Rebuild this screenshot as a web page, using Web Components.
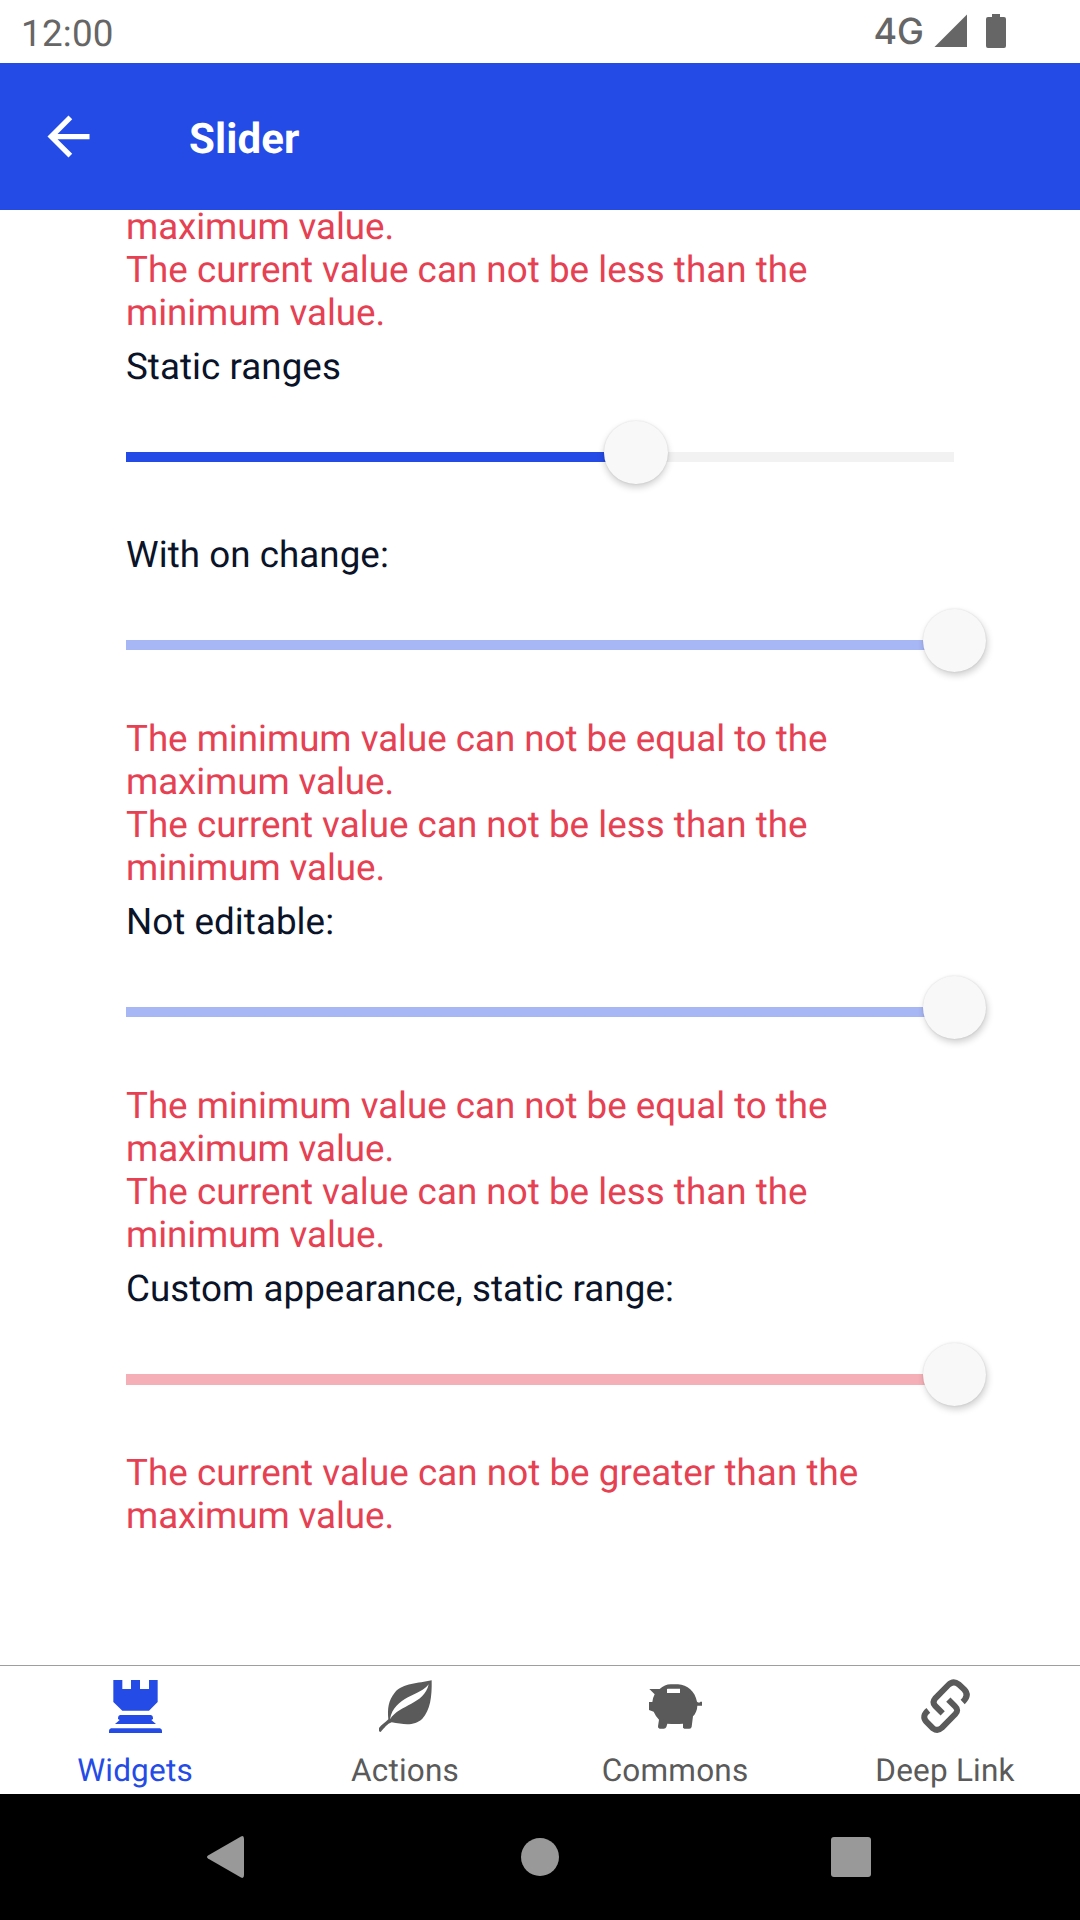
<!DOCTYPE html>
<html lang="en">
<head>
<meta charset="utf-8">
<title>Slider</title>
<style>
html,body{margin:0;padding:0;background:#fff}
body{width:1080px;height:1920px;overflow:hidden;font-family:Roboto,"Noto Sans",sans-serif;font-size:36.75px;color:#0a1328;text-rendering:geometricPrecision}
.tight{letter-spacing:-.03px}
.short{letter-spacing:-.08px}
.loose{letter-spacing:.03px}
.wide{letter-spacing:.05px}
</style>
</head>
<body>
<app-screen>
  <status-bar slot="status"></status-bar>
  <app-bar slot="bar">Slider</app-bar>
  <error-text><span class="short">maximum value.</span><br><span class="loose">The current value can not be less than the</span><br><span class="short">minimum value.</span></error-text>
  <slider-field value="61.55" label="Static ranges"></slider-field>
  <slider-field value="100" label="With on change:" tone="muted"></slider-field>
  <error-text><span class="tight">The minimum value can not be equal to the</span><br><span class="short">maximum value.</span><br><span class="loose">The current value can not be less than the</span><br><span class="short">minimum value.</span></error-text>
  <slider-field value="100" label="Not editable:" tone="muted"></slider-field>
  <error-text><span class="tight">The minimum value can not be equal to the</span><br><span class="short">maximum value.</span><br><span class="loose">The current value can not be less than the</span><br><span class="short">minimum value.</span></error-text>
  <slider-field value="100" label="Custom appearance, static range:" tone="danger"></slider-field>
  <error-text><span class="wide">The current value can not be greater than the</span><br><span class="short">maximum value.</span></error-text>
  <tab-bar slot="tabs">
    <tab-item active label="Widgets"><svg viewBox="129 75 192 189" width="64" height="63" fill="currentColor"><path d="M160 90H187V117H213V90H240V117H267V90H293V156L267 182H187L160 156ZM180 195H273Q279 197 279 204V207L274 210L288 222H165L179 210L174 207V204Q174 197 180 195ZM153 235H300Q306 237 306 242V249H147V242Q147 237 153 235Z"/></svg></tab-item>
    <tab-item label="Actions"><svg viewBox="129 75 192 189" width="64" height="63" fill="currentColor"><path d="M305 91C306 140 301 181 277 206C253 229 222 223 185 217C171 222 164 233 152 246L147 244V234C155 223 166 218 175 208C172 176 175 151 194 128C220 98 264 101 305 91ZM296 103C273 137 192 139 180 208C210 162 282 165 296 103Z"/></svg></tab-item>
    <tab-item label="Commons"><svg viewBox="159 75 192 189" width="64" height="63" fill="currentColor" fill-rule="evenodd"><path d="M178 117H209Q224 103 242 103H264C292 104 315 124 321 155Q328 160 331 155H336V167H322C322 180 316 192 309 199L305 230Q304 236 298 236H283Q277 235 279 229V221Q256 223 232 221L229 231Q227 236 221 236H209Q203 235 204 229L207 209Q197 199 191 185L177 180V156H187Q189 142 194 133ZM233 116Q231 116 231 118V129H270V116Z"/></svg></tab-item>
    <tab-item label="Deep Link"><svg viewBox="159 75 192 189" width="64" height="63" fill="none" stroke="currentColor" stroke-width="18"><path d="M248 190L225 167Q216 156 225 146L265 105Q280 90 296 103L313 119Q329 136 308 156M265 149L286 170Q297 180 286 192L246 233Q233 245 219 235L199 215Q184 198 205 181"/></svg></tab-item>
  </tab-bar>
  <nav-bar slot="nav"></nav-bar>
</app-screen>
<script>
const define = (name, render) => customElements.define(name, class extends HTMLElement {
  constructor() { super(); this.attachShadow({mode: 'open'}); }
  connectedCallback() { this.shadowRoot.innerHTML = render(this); }
});

define('app-screen', () => `<style>
:host{display:flex;flex-direction:column;width:1080px;height:1920px;background:#fff;overflow:hidden}
main{flex:1;min-height:0;box-sizing:border-box;overflow:hidden;display:flex;flex-direction:column;justify-content:flex-end;padding:0 126px 128px}
</style><slot name="status"></slot><slot name="bar"></slot><main><slot></slot></main><slot name="tabs"></slot><slot name="nav"></slot>`);

define('status-bar', () => `<style>
:host{display:flex;flex:none;height:63px;box-sizing:border-box;padding:0 74px 0 21px;color:#666;line-height:67px}
.time{letter-spacing:.25px}
.net{margin-left:auto;font-family:Inter,Roboto,sans-serif;font-size:36px;font-weight:500;line-height:62px}
svg{display:block;margin-left:9px}
</style><span class="time">12:00</span><span class="net">4G</span><svg width="73" height="63" viewBox="933 0 73 63" fill="#666"><path d="M967 14.5V47H934.5ZM992 14H1000V17H1004Q1006 17 1006 19V46Q1006 48 1004 48H988Q986 48 986 46V19Q986 17 988 17H992Z"/></svg>`);

define('app-bar', () => `<style>
:host{display:flex;flex:none;align-items:center;height:147px;box-sizing:border-box;padding-left:37px;background:#254be6;color:#fff;font-size:42px;font-weight:700;letter-spacing:.1px}
svg{margin-right:89px}
span{padding-top:6px}
</style><svg width="63" height="63" viewBox="0 0 24 24" fill="#fff"><path d="M20 11H7.83l5.59-5.59L12 4l-8 8 8 8 1.41-1.41L7.83 13H20v-2z"/></svg><span><slot></slot></span>`);

define('error-text', () => `<style>
:host{display:block;flex:none;color:#e64152;line-height:43px;padding:7px 0 0;white-space:nowrap}
</style><slot></slot>`);

define('slider-field', el => {
  const v = +el.getAttribute('value');
  const tone = el.getAttribute('tone');
  const fill = {muted: '#a7b6f5', danger: '#f5b0b7'}[tone] || '#254be6';
  const h = tone === 'danger' ? 11 : 10;
  return `<style>
:host{display:block;flex:none;height:188px}
.label{padding-top:11px;line-height:43px;letter-spacing:.05px}
.control{position:relative;height:${h}px;margin-top:64px;background:#f2f2f2}
.fill{height:100%;width:${v}%;background:${fill}}
.thumb{position:absolute;left:${v}%;top:-31.500px;width:63.500px;height:63.500px;margin-left:-31.300px;border-radius:50%;background:#f8f8f8;box-shadow:${v === 100 ? 1.5 : 0}px 3.500px 7px rgba(0,0,0,.19),0 0 2px rgba(0,0,0,.12)}
</style><div class="label">${el.getAttribute('label')}</div><div class="control"><div class="fill"></div><div class="thumb"></div></div>`;
});

define('tab-bar', () => `<style>
:host{display:flex;flex:none;height:129px;box-sizing:border-box;border-top:1px solid #9e9e9e;background:#fff}
</style><slot></slot>`);

define('tab-item', el => `<style>
:host{display:flex;flex:1;flex-direction:column;align-items:center;padding-top:9px;font-size:31.5px;line-height:37px;letter-spacing:.2px;color:${el.hasAttribute('active') ? '#254be6' : '#5a5a5a'}}
span{margin-top:14px}
</style><slot></slot><span>${el.getAttribute('label')}</span>`);

define('nav-bar', () => `<style>
:host{display:flex;flex:none;justify-content:space-between;align-items:center;height:126px;box-sizing:border-box;padding:0 209px 0 207px;background:#000}
svg{display:block}
.home{margin-left:4px}
</style><svg width="38" height="42" viewBox="0 0 38 42" fill="#999"><path d="M34 .5Q37 -1 37 3V39Q37 43 34 41.500L1 22.500Q-1 21 1 19.500Z"/></svg><svg class="home" width="38" height="38"><circle cx="19" cy="19" r="19" fill="#999"/></svg><svg width="40" height="40"><rect width="40" height="40" rx="3" fill="#999"/></svg>`);
</script>
</body>
</html>
